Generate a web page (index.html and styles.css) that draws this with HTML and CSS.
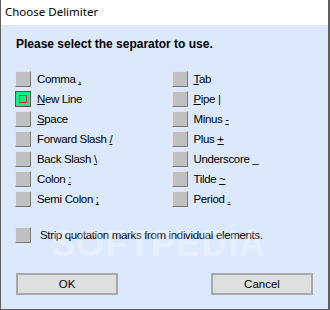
FILE: index.html
```html
<!DOCTYPE html>
<html lang="en">
<head>
    <meta charset="UTF-8">
    <title>Choose Delimiter</title>
    <link rel="stylesheet" href="styles.css">
</head>
<body>
    <div class="window">
        <div class="titlebar">Choose Delimiter</div>
        <div class="content">
            <p class="prompt">Please select the separator to use.</p>
            <div class="options">
                <div class="column">
                    <div class="option"><span class="box"></span><span class="label">Comma <u>,</u></span></div>
                    <div class="option"><span class="box checked"></span><span class="label"><u>N</u>ew Line</span></div>
                    <div class="option"><span class="box"></span><span class="label"><u>S</u>pace</span></div>
                    <div class="option"><span class="box"></span><span class="label">Forward Slash <u>/</u></span></div>
                    <div class="option"><span class="box"></span><span class="label">Back Slash <u>\</u></span></div>
                    <div class="option"><span class="box"></span><span class="label">Colon <u>:</u></span></div>
                    <div class="option"><span class="box"></span><span class="label">Semi Colon <u>;</u></span></div>
                </div>
                <div class="column">
                    <div class="option"><span class="box"></span><span class="label"><u>T</u>ab</span></div>
                    <div class="option"><span class="box"></span><span class="label"><u>P</u>ipe |</span></div>
                    <div class="option"><span class="box"></span><span class="label">Minus <u>-</u></span></div>
                    <div class="option"><span class="box"></span><span class="label">Plus <u>+</u></span></div>
                    <div class="option"><span class="box"></span><span class="label">Underscore _</span></div>
                    <div class="option"><span class="box"></span><span class="label">Tilde <u>~</u></span></div>
                    <div class="option"><span class="box"></span><span class="label">Period <u>.</u></span></div>
                </div>
            </div>
            <div class="option strip"><span class="box"></span><span class="label">Strip quotation marks from individual elements.</span></div>
            <div class="buttons">
                <button class="btn">OK</button>
                <button class="btn">Cancel</button>
            </div>
            <div class="watermark">SOFTPEDIA</div>
        </div>
    </div>
</body>
</html>
```

FILE: styles.css
```css
body {
    margin: 0;
    font-family: "Liberation Sans", Arial, sans-serif;
    font-size: 12px;
    color: #000;
}

.window {
    width: 330px;
    height: 310px;
    box-sizing: border-box;
    border: 1px solid #5f5f5f;
    border-top: none;
    border-right-width: 2px;
    display: flex;
    flex-direction: column;
}

.titlebar {
    height: 25px;
    background-color: #fff;
    padding-left: 4px;
    font-family: "Noto Sans", sans-serif;
    font-size: 11.5px;
    line-height: 23px;
    color: #000;
}

.content {
    flex: 1;
    background-color: #dce9fc;
    padding: 11px 0 0 14px;
    position: relative;
}

.prompt {
    margin: 0 0 17px 1px;
    font-weight: bold;
    font-size: 12px;
    line-height: 16px;
}

.options {
    display: flex;
}

.column {
    width: 166px;
}

.option {
    display: flex;
    align-items: center;
    height: 20px;
}

.box {
    width: 14px;
    height: 14px;
    background-color: #c0c0c0;
    border: 1px solid;
    border-color: #e4e4e4 #7a7a7a #7a7a7a #e4e4e4;
    margin-right: 6px;
    flex-shrink: 0;
}

.box.checked {
    background-color: #10f080;
    border-color: #555;
    position: relative;
}

.box.checked::after {
    content: "";
    position: absolute;
    left: 3px;
    top: 3px;
    width: 6px;
    height: 6px;
    border: 1px solid #e0205a;
}

.label {
    font-size: 11.5px;
    letter-spacing: -0.35px;
}

.label u {
    text-underline-offset: 1px;
}

.strip {
    margin-top: 16px;
}

.strip .box {
    margin-right: 9px;
}

.buttons {
    display: flex;
    justify-content: space-between;
    width: 297px;
    margin-top: 28px;
    margin-left: 1px;
}

.btn {
    width: 102px;
    height: 22px;
    background-color: #dfdfdf;
    border: 2px solid #a9a9a9;
    font-family: "Liberation Sans", Arial, sans-serif;
    font-size: 11.5px;
    color: #000;
    padding: 0;
}

.watermark {
    position: absolute;
    left: 50px;
    top: 198px;
    font-size: 36px;
    font-weight: bold;
    color: rgba(255, 255, 255, 0.3);
    letter-spacing: 1px;
    pointer-events: none;
}
```
